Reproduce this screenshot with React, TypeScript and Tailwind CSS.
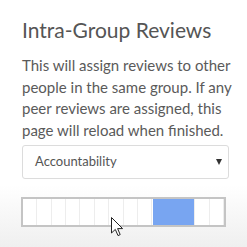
import React from "react";

export default function App() {
  const cells = Array.from({ length: 14 });
  return (
    <div
      className="relative w-[247px] h-[247px] overflow-hidden bg-[linear-gradient(to_bottom,#ffffff_0px,#ffffff_185px,#efefef_247px)]"
      style={{ fontFamily: "Lato, 'Open Sans', sans-serif" }}
    >
      <div className="flex flex-col pl-[22px] pt-[17px]">
        <h1 className="text-[21px] leading-[25px] text-[#555555] font-normal">Intra-Group Reviews</h1>
        <p className="mt-[13px] text-[15px] leading-[21.7px] text-[#5a5a5a]">
          <span className="block whitespace-nowrap">This will assign reviews to other</span>
          <span className="block whitespace-nowrap">people in the same group. If any</span>
          <span className="block whitespace-nowrap">peer reviews are assigned, this</span>
          <span className="block whitespace-nowrap">page will reload when finished.</span>
        </p>
        <div className="mt-[3px] w-[207px] h-[34px] border border-[#dcdcdc] rounded-[3px] bg-white flex items-center justify-between pl-[12px] pr-[6px]">
          <span className="text-[13px] text-[#555555]">Accountability</span>
          <svg width="6" height="6" viewBox="0 0 6 6">
            <path d="M0 0 L6 0 L3 6 Z" fill="#333" />
          </svg>
        </div>
        <div className="relative mt-[18px] -ml-[1px] w-[205px] h-[30px] border-2 border-[#c4c4c4] bg-white flex">
          {cells.map((_, i) => (
            <div key={i} className="flex-1 border-r border-[#ededed] last:border-r-0" />
          ))}
          <div className="absolute top-0 bottom-0 left-[130px] w-[41px] bg-[#78a5f1]" />
        </div>
      </div>
      <svg
        className="absolute left-[111px] top-[217px]"
        width="13"
        height="20"
        viewBox="0 0 13 20"
      >
        <path
          d="M0.5 0.5 L0.5 16 L4.3 12.4 L7 18.6 L9.2 17.6 L6.6 11.6 L11.6 11.6 Z"
          fill="#fff"
          stroke="#222"
          strokeWidth="1"
          strokeLinejoin="round"
        />
      </svg>
    </div>
  );
}
